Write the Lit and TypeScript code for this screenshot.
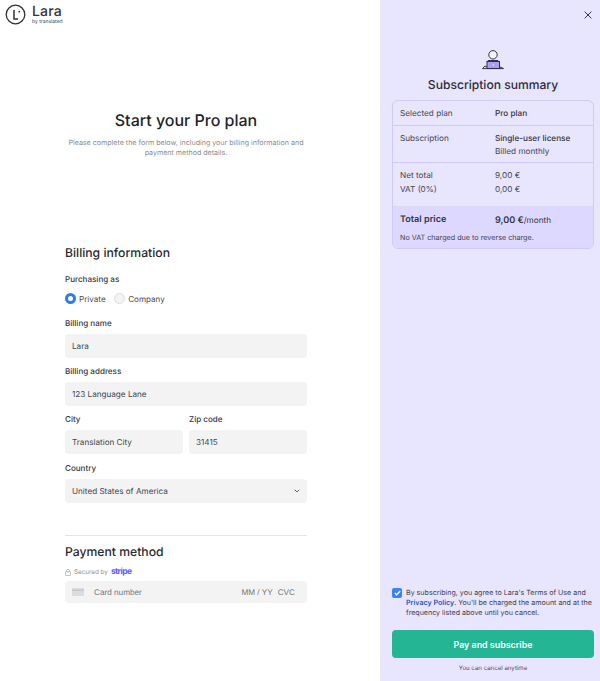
import { LitElement, html, css } from "lit";
import { customElement } from "lit/decorators.js";

@customElement("app-root")
export class AppRoot extends LitElement {
  static styles = css`
    :host { display: block; width: 600px; height: 681px; overflow: hidden; font-family: Inter, "Liberation Sans", sans-serif; color: #2b2b33; text-rendering: geometricPrecision; }
    * { box-sizing: border-box; }
    .page { display: flex; height: 681px; }
    .left { width: 380px; background: #fff; display: flex; flex-direction: column; }
    .logo { display: flex; align-items: center; gap: 6px; padding-left: 5px; height: 29px; }
    .logo-text { display: flex; flex-direction: column; line-height: 1; padding-top: 1px; }
    .logo-name { font-size: 14px; font-weight: 500; line-height: 14px; letter-spacing: .2px; color: #33333b; }
    .logo-by { font-size: 5px; line-height: 6px; color: #44444c; }
    .form { width: 242px; margin-left: 65px; display: flex; flex-direction: column; }
    .title { font-size: 16px; line-height: 24px; font-weight: 500; text-align: center; margin: 79px -20px 0; color: #222228; }
    .sub { font-size: 7.1px; line-height: 10px; text-align: center; color: #8b8b90; margin: 6px -10px 0; }
    h2 { font-size: 12.2px; line-height: 16px; font-weight: 500; margin: 0; color: #2a2a30; }
    .billing { margin-top: 87px; }
    .lab { font-size: 8.05px; line-height: 10px; font-weight: 500; color: #38383f; display: block; }
    .radios { display: flex; align-items: center; margin: 8.5px 0 5px; font-size: 8.1px; color: #4a4a52; height: 12px; }
    .radio { width: 11px; height: 11px; border-radius: 50%; flex: none; }
    .on { border: 3px solid #2f7bf2; background: #fff; margin-right: 3px; }
    .off { border: 1px solid #dedee0; background: #f4f4f5; margin: 0 3.5px 0 8px; }
    .field { margin-top: 8.3px; }
    .first { margin-top: 13px; }
    .input { height: 24px; margin-top: 6px; background: #f3f3f4; border-radius: 4px; display: flex; align-items: center; justify-content: space-between; padding: 0 7px; font-size: 8.15px; color: #45454c; }
    .two { display: grid; grid-template-columns: 118px 118px; gap: 6px; }
    hr { border: 0; border-top: 1px solid #e4e4e6; margin: 32.5px 0 0; }
    .pay { margin-top: 8px; }
    .secured { display: flex; align-items: center; gap: 3px; font-size: 6.3px; color: #909096; margin-top: 6px; height: 12px; }
    .stripe { font-size: 8.5px; font-weight: 700; color: #635bff; letter-spacing: -.6px; }
    .card { height: 22px; margin-top: 3px; background: #f3f3f4; border-radius: 4px; display: flex; align-items: center; padding: 0 7px; font-size: 8.2px; color: #77777c; font-family: "Liberation Sans", sans-serif; }
    .card svg { margin-right: 10px; }
    .card .spacer { flex: 1; }
    .card .cvc { margin-left: 5px; margin-right: 5px; }

    .right { width: 220px; background: #e8e5ff; display: flex; flex-direction: column; padding: 0 6px 0 12px; position: relative; }
    .close { position: absolute; top: 10.5px; right: 8px; width: 8px; height: 8px; }
    .illus { display: flex; justify-content: center; margin-top: 48px; height: 24px; }
    .stitle { font-size: 12.1px; line-height: 16px; font-weight: 500; text-align: center; margin-top: 5px; color: #2c2c36; }
    .sum { margin-top: 7px; border: 1px solid #cfc9ff; border-radius: 6px; overflow: hidden; font-size: 8.2px; color: #45454f; }
    .row { display: grid; grid-template-columns: 95px 1fr; padding: 0 7px; border-bottom: 1px solid #cfc9ff; }
    .r1 { height: 25px; align-items: center; }
    .r2 { height: 37px; padding-top: 6px; line-height: 13px; }
    .r3 { height: 43px; border-bottom: 0; padding-top: 6px; line-height: 13.5px; }
    .b { font-weight: 500; color: #33333d; }
    .total { background: #dcd8ff; padding: 0 7px; height: 42px; }
    .tline { display: grid; grid-template-columns: 95px 1fr; padding-top: 7px; font-size: 9.1px; line-height: 14px; font-weight: 600; color: #35353f; }
    .tline span span { font-weight: 400; font-size: 8.2px; }
    .note { font-size: 7.2px; margin-top: 5px; line-height: 10px; color: #45454f; }
    .spacer { flex: 1; }
    .agree { display: flex; gap: 4px; font-size: 7.1px; line-height: 10px; color: #42424c; }
    .check { flex: none; width: 10px; height: 10px; border-radius: 2px; background: #3b82f6; display: flex; align-items: center; justify-content: center; }
    .agree a { color: #1d54c4; font-weight: 600; }
    .btn { margin-top: 12px; height: 28px; border-radius: 4px; background: #24b694; color: #fff; font-size: 8.9px; font-weight: 600; display: flex; align-items: center; justify-content: center; border: 0; font-family: inherit; width: 202px; }
    .cancel { text-align: center; width: 202px; font-size: 6.1px; line-height: 10px; margin: 6px 0 7px; color: #4a4a54; }
  `;

  render() {
    return html`<div class="page">
      <div class="left">
        <div class="logo">
          <svg width="21" height="21" viewBox="0 0 21 21" fill="none" stroke="#303038"><circle cx="10.5" cy="10.5" r="9.3" stroke-width="1.3"/><path d="M9 6v9h4" stroke-width="1.5"/><circle cx="14.3" cy="7.7" r=".9" fill="#303038" stroke="none"/></svg>
          <div class="logo-text"><span class="logo-name">Lara</span><span class="logo-by">by translated</span></div>
        </div>
        <div class="form">
          <div class="title">Start your Pro plan</div>
          <div class="sub">Please complete the form below, including your billing information and<br />payment method details.</div>
          <h2 class="billing">Billing information</h2>
          <div class="field first"><span class="lab">Purchasing as</span>
            <div class="radios"><span class="radio on"></span>Private<span class="radio off"></span>Company</div>
          </div>
          <div class="field"><span class="lab">Billing name</span><div class="input">Lara</div></div>
          <div class="field"><span class="lab">Billing address</span><div class="input">123 Language Lane</div></div>
          <div class="two">
            <div class="field"><span class="lab">City</span><div class="input">Translation City</div></div>
            <div class="field"><span class="lab">Zip code</span><div class="input">31415</div></div>
          </div>
          <div class="field"><span class="lab">Country</span><div class="input">United States of America
            <svg width="6" height="4" viewBox="0 0 6 4" fill="none" stroke="#66666c"><path d="M.7.7 3 3 5.3.7"/></svg></div></div>
          <hr />
          <h2 class="pay">Payment method</h2>
          <div class="secured">
            <svg width="6" height="7" viewBox="0 0 6 7" fill="none" stroke="#8f8f95" stroke-width=".6"><rect x=".4" y="2.8" width="5.2" height="3.8" rx=".7"/><path d="M1.5 2.8V1.9a1.5 1.5 0 0 1 3 0v.9"/></svg>
            <span>Secured by</span><span class="stripe">stripe</span>
          </div>
          <div class="card">
            <svg width="12" height="8" viewBox="0 0 12 8"><rect width="12" height="8" rx="1" fill="#dcdce0"/><rect y="1.5" width="12" height="1.5" fill="#c8c8cd"/></svg>
            Card number<span class="spacer"></span>MM / YY<span class="cvc">CVC</span>
          </div>
        </div>
      </div>
      <div class="right">
        <svg class="close" viewBox="0 0 9 9" fill="none" stroke="#2e2e38" stroke-width="1.1"><path d="M.7.7l7.6 7.6M8.3.7.7 8.3"/></svg>
        <div class="illus">
          <svg width="24" height="24" viewBox="0 0 24 24" fill="none" stroke="#33333d" stroke-width="1">
            <circle cx="12" cy="6.8" r="4.2" fill="#f3f1ff"/>
            <path d="M6 14l1-1.5h10l1 1.5" fill="#e8e5ff"/>
            <rect x="6" y="13.5" width="12.5" height="7" fill="#a99fff"/>
            <circle cx="12.2" cy="17" r=".7" fill="#fff" stroke="none"/>
            <path d="M1.5 20.5 4 18l2 1M18.5 19l2 .5 2 1"/><path d="M1.5 20.6h21"/>
          </svg>
        </div>
        <div class="stitle">Subscription summary</div>
        <div class="sum">
          <div class="row r1"><span>Selected plan</span><span class="b">Pro plan</span></div>
          <div class="row r2"><span>Subscription</span><span><span class="b">Single-user license</span><br />Billed monthly</span></div>
          <div class="row r3"><span>Net total<br />VAT (0%)</span><span>9,00 €<br />0,00 €</span></div>
          <div class="total">
            <div class="tline"><span>Total price</span><span>9,00 €<span>/month</span></span></div>
            <div class="note">No VAT charged due to reverse charge.</div>
          </div>
        </div>
        <div class="spacer"></div>
        <div class="agree">
          <span class="check"><svg width="7" height="6" viewBox="0 0 7 6" fill="none" stroke="#fff" stroke-width="1.3"><path d="M.8 3l1.8 1.8L6.2 1"/></svg></span>
          <span>By subscribing, you agree to Lara's Terms of Use and <a>Privacy Policy</a>. You'll be charged the amount and at the frequency listed above until you cancel.</span>
        </div>
        <button class="btn">Pay and subscribe</button>
        <div class="cancel">You can cancel anytime</div>
      </div>
    </div>`;
  }
}
